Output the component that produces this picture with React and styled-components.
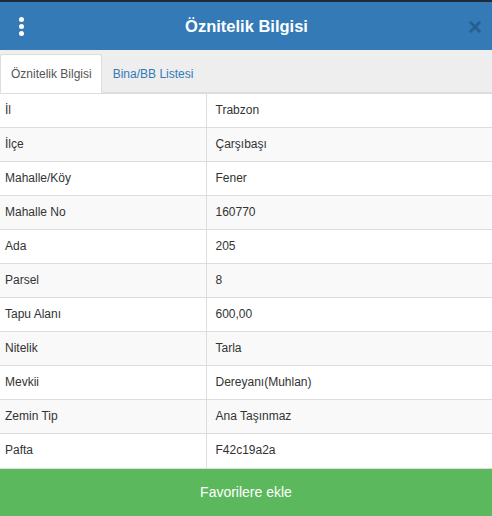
import React, { useState } from 'react';
import styled, { createGlobalStyle } from 'styled-components';

const rows = [
  ['İl', 'Trabzon'],
  ['İlçe', 'Çarşıbaşı'],
  ['Mahalle/Köy', 'Fener'],
  ['Mahalle No', '160770'],
  ['Ada', '205'],
  ['Parsel', '8'],
  ['Tapu Alanı', '600,00'],
  ['Nitelik', 'Tarla'],
  ['Mevkii', 'Dereyanı(Muhlan)'],
  ['Zemin Tip', 'Ana Taşınmaz'],
  ['Pafta', 'F42c19a2a'],
];

const GlobalStyle = createGlobalStyle`
  html, body {
    margin: 0;
    padding: 0;
    background: #fff;
  }
  body {
    font-family: "Liberation Sans", Arial, sans-serif;
    font-size: 12px;
    color: #333;
  }
  * {
    box-sizing: border-box;
  }
`;

const App = () => {
  const [tab, setTab] = useState(0);

  return (
    <Panel>
      <GlobalStyle />
      <Header>
        <MenuButton aria-label="menu">
          <Dot />
          <Dot />
          <Dot />
        </MenuButton>
        <Title>Öznitelik Bilgisi</Title>
        <CloseButton aria-label="close">×</CloseButton>
      </Header>
      <Tabs>
        <Tab active={tab === 0} onClick={() => setTab(0)}>Öznitelik Bilgisi</Tab>
        <Tab active={tab === 1} onClick={() => setTab(1)}>Bina/BB Listesi</Tab>
      </Tabs>
      <Table>
        <tbody>
          {rows.map(([label, value], i) => (
            <Row key={label} striped={i % 2 === 1}>
              <LabelCell>{label}</LabelCell>
              <Cell>{value}</Cell>
            </Row>
          ))}
        </tbody>
      </Table>
      <FavButton>Favorilere ekle</FavButton>
    </Panel>
  );
};

const Panel = styled.div`
  width: 492px;
  height: 516px;
  display: flex;
  flex-direction: column;
  background: #fff;
  overflow: hidden;
`;

const Header = styled.div`
  height: 50px;
  flex-shrink: 0;
  display: flex;
  align-items: center;
  background: #337ab7;
  border-top: 2px solid #1d2b3a;
  padding: 0 10px 0 16px;
`;

const MenuButton = styled.div`
  width: 8px;
  display: flex;
  flex-direction: column;
  align-items: center;
  gap: 2px;
  margin-left: 1px;
`;

const Dot = styled.span`
  width: 5px;
  height: 5px;
  border-radius: 50%;
  background: #fff;
`;

const Title = styled.h4`
  flex: 1;
  margin: 0;
  text-align: center;
  color: #fff;
  font-size: 16.5px;
  font-weight: bold;
  line-height: 20px;
`;

const CloseButton = styled.span`
  font-size: 24px;
  font-weight: bold;
  line-height: 1;
  color: #000;
  opacity: 0.22;
  margin-top: 1px;
  cursor: pointer;
`;

const Tabs = styled.div`
  height: 43px;
  flex-shrink: 0;
  display: flex;
  align-items: flex-end;
  background: #eee;
  border-bottom: 1px solid #ddd;
`;

const Tab = styled.div`
  height: 39px;
  margin-bottom: -1px;
  padding: 0 9px 0 10px;
  display: flex;
  align-items: center;
  font-size: 12px;
  cursor: pointer;
  color: ${({ active }) => (active ? '#555' : '#337ab7')};
  background: ${({ active }) => (active ? '#fff' : 'transparent')};
  border: 1px solid ${({ active }) => (active ? '#ddd' : 'transparent')};
  border-bottom-color: ${({ active }) => (active ? '#fff' : 'transparent')};
  border-radius: 3px 3px 0 0;
`;

const Table = styled.table`
  width: 100%;
  border-collapse: collapse;
  font-size: 12px;
`;

const Row = styled.tr`
  background: ${({ striped }) => (striped ? '#f9f9f9' : '#fff')};
`;

const Cell = styled.td`
  height: 34px;
  padding: 8px 9px;
  line-height: 17px;
  border-top: 1px solid #ddd;
  color: #333;
`;

const LabelCell = styled(Cell)`
  width: 206px;
  padding-left: 5px;
  border-right: 1px solid #ddd;
`;

const FavButton = styled.button`
  flex: 1;
  width: 100%;
  border: none;
  border-top: 1px solid #ddd;
  background: #5cb85c;
  color: #fff;
  font-family: "Liberation Sans", Arial, sans-serif;
  font-size: 14px;
  cursor: pointer;
`;

export default App;
